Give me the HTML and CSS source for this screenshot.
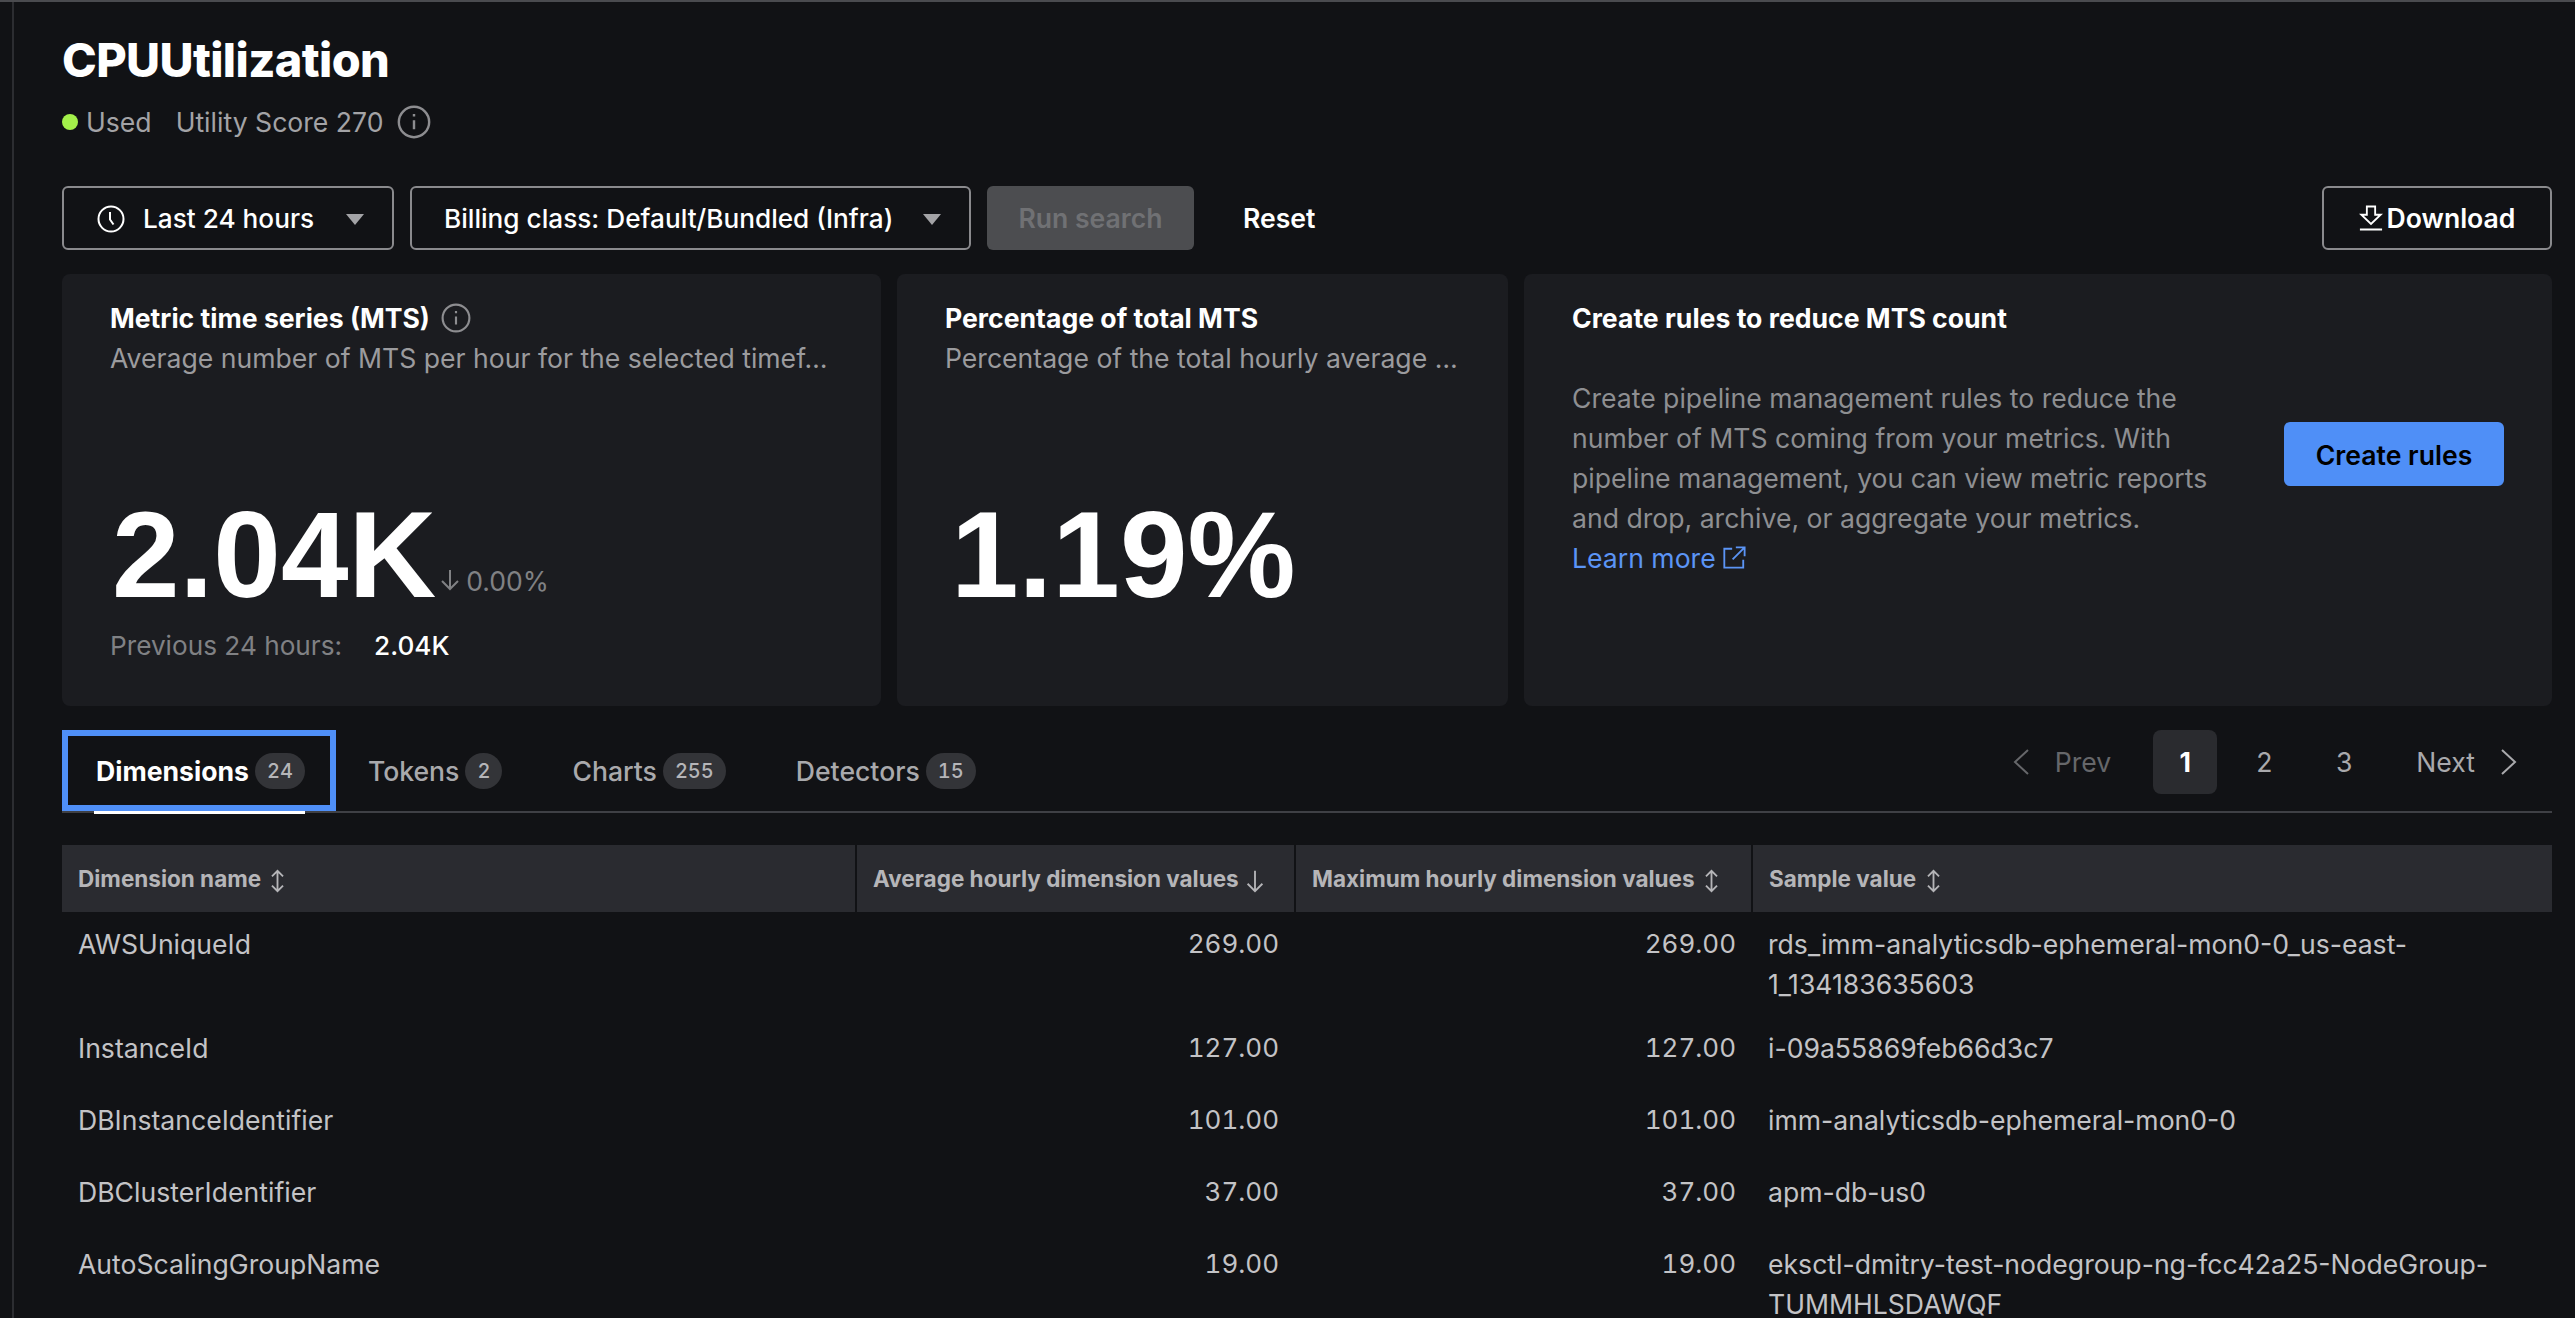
FILE: index.html
```html
<!DOCTYPE html>
<html lang="en">
<head>
    <meta charset="UTF-8">
    <title>CPUUtilization</title>
    <link rel="stylesheet" href="styles.css">
</head>
<body>
    <div class="side-strip"></div>
    <main class="page">
        <h1 class="title">CPUUtilization</h1>
        <div class="meta">
            <span class="dot"></span>
            <span class="used">Used</span>
            <span class="score">Utility Score 270</span>
            <svg class="icon-info" viewBox="0 0 28 28"><circle cx="14" cy="14" r="12.5"/><path d="M14 12.5v7.5M14 7.5v2"/></svg>
        </div>

        <div class="toolbar">
            <button class="select select-time">
                <svg class="icon-clock" viewBox="0 0 28 28"><circle cx="14" cy="14" r="12.5"/><path d="M13 7v7.5l3.5 5"/></svg>
                <span>Last 24 hours</span>
                <span class="caret"></span>
            </button>
            <button class="select select-billing">
                <span>Billing class: Default/Bundled (Infra)</span>
                <span class="caret"></span>
            </button>
            <button class="run-search">Run search</button>
            <button class="reset">Reset</button>
            <button class="download">
                <svg class="icon-download" viewBox="0 0 26 28"><path d="M8.5 1.5h9v9h6L13 20.5 2.500 10.500h6zM1 26.500h24"/></svg>
                <span>Download</span>
            </button>
        </div>

        <section class="cards">
            <div class="card card-mts">
                <div class="card-title">Metric time series (MTS)
                    <svg class="icon-info icon-info-sm" viewBox="0 0 28 28"><circle cx="14" cy="14" r="12.5"/><path d="M14 12.5v7.500M14 7.500v2"/></svg>
                </div>
                <div class="card-sub">Average number of MTS per hour for the selected timef…</div>
                <div class="big-row">
                    <span class="big-number">2.04K</span>
                    <svg class="icon-down" viewBox="0 0 20 22"><path d="M10 1v19M2 12l8 8 8-8"/></svg>
                    <span class="delta">0.00%</span>
                </div>
                <div class="previous"><span>Previous 24 hours:</span><strong>2.04K</strong></div>
            </div>
            <div class="card card-pct">
                <div class="card-title">Percentage of total MTS</div>
                <div class="card-sub">Percentage of the total hourly average …</div>
                <div class="big-row"><span class="big-number">1.19%</span></div>
            </div>
            <div class="card card-rules">
                <div class="rules-text">
                    <div class="card-title">Create rules to reduce MTS count</div>
                    <p class="rules-body">Create pipeline management rules to reduce the number of MTS coming from your metrics. With pipeline management, you can view metric reports and drop, archive, or aggregate your metrics.<br>
                        <a class="learn-more">Learn more
                            <svg class="icon-external" viewBox="0 0 26 26"><path d="M11 3H2.500v20.500H23V15M15 1.500h9.500V11M24 2 11.500 14.500"/></svg>
                        </a>
                    </p>
                </div>
                <button class="create-rules">Create rules</button>
            </div>
        </section>

        <nav class="tabs">
            <a class="tab tab-active">Dimensions <span class="badge">24</span></a>
            <a class="tab">Tokens <span class="badge">2</span></a>
            <a class="tab">Charts <span class="badge">255</span></a>
            <a class="tab">Detectors <span class="badge">15</span></a>
            <div class="pager">
                <span class="pager-link pager-prev">
                    <svg class="icon-chevron" viewBox="0 0 16 26"><path d="M15 1 2 13l13 12"/></svg>
                    Prev
                </span>
                <span class="page-num page-current">1</span>
                <span class="page-num">2</span>
                <span class="page-num">3</span>
                <span class="pager-link pager-next">
                    Next
                    <svg class="icon-chevron" viewBox="0 0 16 26"><path d="m1 1 13 12L1 25"/></svg>
                </span>
            </div>
        </nav>

        <table class="dims">
            <thead>
                <tr>
                    <th class="col-name">Dimension name <svg class="icon-sort" viewBox="0 0 16 26"><path d="M8 2v22M2 8l6-6 6 6M2 18l6 6 6-6"/></svg></th>
                    <th class="col-avg">Average hourly dimension values <svg class="icon-sort icon-sorted" viewBox="0 0 20 26"><path d="M10 2v22M2 16l8 8 8-8"/></svg></th>
                    <th class="col-max">Maximum hourly dimension values <svg class="icon-sort" viewBox="0 0 16 26"><path d="M8 2v22M2 8l6-6 6 6M2 18l6 6 6-6"/></svg></th>
                    <th class="col-sample">Sample value <svg class="icon-sort" viewBox="0 0 16 26"><path d="M8 2v22M2 8l6-6 6 6M2 18l6 6 6-6"/></svg></th>
                </tr>
            </thead>
            <tbody>
                <tr>
                    <td>AWSUniqueId</td>
                    <td class="num">269.00</td>
                    <td class="num">269.00</td>
                    <td>rds_imm-analyticsdb-ephemeral-mon0-0_us-east-<br>1_134183635603</td>
                </tr>
                <tr>
                    <td>InstanceId</td>
                    <td class="num">127.00</td>
                    <td class="num">127.00</td>
                    <td>i-09a55869feb66d3c7</td>
                </tr>
                <tr>
                    <td>DBInstanceIdentifier</td>
                    <td class="num">101.00</td>
                    <td class="num">101.00</td>
                    <td>imm-analyticsdb-ephemeral-mon0-0</td>
                </tr>
                <tr>
                    <td>DBClusterIdentifier</td>
                    <td class="num">37.00</td>
                    <td class="num">37.00</td>
                    <td>apm-db-us0</td>
                </tr>
                <tr>
                    <td>AutoScalingGroupName</td>
                    <td class="num">19.00</td>
                    <td class="num">19.00</td>
                    <td>eksctl-dmitry-test-nodegroup-ng-fcc42a25-NodeGroup-<br>TUMMHLSDAWQF</td>
                </tr>
            </tbody>
        </table>
    </main>
</body>
</html>
```

FILE: styles.css
```css
* {
    box-sizing: border-box;
}
html, body {
    height: 100%;
}
body {
    margin: 0;
    display: flex;
    height: 100vh;
    overflow: hidden;
    background-color: #111215;
    border-top: 2px solid #4a4b4f;
    color: #fff;
    font-family: Inter, "Liberation Sans", sans-serif;
    font-size: 26.6px;
    line-height: 40px;
}
button {
    font-family: inherit;
    font-size: 26.6px;
    line-height: 40px;
    color: inherit;
    background: none;
    border: none;
    padding: 0;
}
svg {
    fill: none;
    stroke: currentColor;
    stroke-width: 2;
    flex: none;
}
.side-strip {
    width: 14px;
    flex: none;
    border-right: 2px solid #2c2d31;
}
.page {
    flex: 1;
    min-width: 0;
    padding: 28px 23px 0 48px;
}
.title {
    margin: 0;
    font-size: 46.8px;
    line-height: 60px;
    font-weight: 800;
    letter-spacing: -0.6px;
}
.meta {
    display: flex;
    align-items: center;
    height: 40px;
    margin-top: 12px;
    color: #a3a3a6;
}
.dot {
    width: 16px;
    height: 16px;
    border-radius: 50%;
    background-color: #a3f04a;
    margin-right: 8px;
}
.used {
    margin-right: 24px;
}
.icon-info {
    width: 34px;
    height: 34px;
    margin-left: 14px;
    color: #8d8d90;
}
.icon-info-sm {
    width: 30px;
    height: 30px;
    margin-left: 11px;
}
.toolbar {
    display: flex;
    align-items: stretch;
    height: 64px;
    margin-top: 44px;
}
.select {
    display: flex;
    align-items: center;
    border: 2px solid #8a8a8d;
    border-radius: 6px;
    padding: 2px 28px 0 32px;
    margin-right: 16px;
    font-size: 26.2px;
    font-weight: 500;
}
.select-time {
    width: 332px;
}
.select-billing {
    width: 561px;
}
.icon-clock {
    width: 28px;
    height: 28px;
    margin: 0 18px 0 1px;
}
.caret {
    width: 0;
    height: 0;
    margin-left: auto;
    border-left: 9px solid transparent;
    border-right: 9px solid transparent;
    border-top: 11px solid #a3a3a6;
}
.run-search {
    width: 207px;
    background-color: #4c4d50;
    color: #707174;
    border-radius: 6px;
    font-weight: 600;
}
.reset {
    margin-left: 49px;
    font-weight: 600;
}
.download {
    display: flex;
    align-items: center;
    justify-content: center;
    gap: 4px;
    width: 230px;
    margin-left: auto;
    border: 2px solid #8a8a8d;
    border-radius: 6px;
    font-weight: 600;
}
.icon-download {
    width: 24px;
    height: 28px;
}
.cards {
    display: grid;
    grid-template-columns: 819px 611px 1028px;
    gap: 16px;
    height: 432px;
    margin-top: 24px;
}
.card {
    display: flex;
    flex-direction: column;
    min-width: 0;
    background-color: #1b1c20;
    border-radius: 8px;
    padding: 24px 48px 40px;
}
.card-title {
    display: flex;
    align-items: center;
    height: 40px;
    font-weight: 700;
    white-space: nowrap;
}
.card-sub {
    color: #9b9b9e;
    white-space: nowrap;
}
.big-row {
    display: flex;
    align-items: flex-end;
    margin-top: 117px;
}
.big-number {
    font-family: "Liberation Sans", Arial, sans-serif;
    font-size: 121.5px;
    line-height: 120px;
    font-weight: 700;
    margin-left: 2px;
}
.card-pct .big-number {
    margin-left: 6px;
}
.icon-down {
    width: 20px;
    height: 22px;
    margin: 0 0 24px 4px;
    color: #808184;
}
.delta {
    margin: 0 0 14px 6px;
    color: #808184;
}
.previous {
    display: flex;
    gap: 32px;
    margin-top: 11px;
    font-size: 26.2px;
    color: #808184;
}
.previous strong {
    color: #fff;
    font-weight: 500;
}
.card-rules {
    flex-direction: row;
    align-items: flex-start;
}
.rules-text {
    flex: 1;
    min-width: 0;
}
.rules-body {
    margin: 40px 0 0;
    width: 670px;
    color: #8e8f92;
}
.learn-more {
    display: inline-flex;
    align-items: center;
    gap: 6px;
    color: #5b94f5;
}
.icon-external {
    width: 24px;
    height: 24px;
}
.create-rules {
    width: 220px;
    height: 64px;
    padding-top: 2px;
    margin-top: 124px;
    background-color: #4f8ff7;
    color: #000;
    border-radius: 6px;
    font-weight: 600;
}
.tabs {
    position: relative;
    display: flex;
    align-items: flex-start;
    height: 83px;
    margin-top: 24px;
    border-bottom: 2px solid #3f4045;
}
.tab {
    display: flex;
    align-items: center;
    gap: 6px;
    height: 81px;
    padding: 0 35px;
    color: #a9a9ac;
    font-weight: 500;
}
.tab-active {
    position: relative;
    padding: 0 25px 0 28px;
    margin-right: -3px;
    border: 6px solid #4f8ff7;
    color: #fff;
    font-weight: 700;
}
.tab-active::after {
    content: "";
    position: absolute;
    left: 26px;
    right: 25px;
    bottom: -9px;
    height: 3px;
    background-color: #fff;
}
.badge {
    min-width: 36px;
    height: 36px;
    padding: 0 12px;
    border-radius: 18px;
    background-color: #333438;
    color: #b5b5b8;
    font-size: 20px;
    font-weight: 500;
    font-feature-settings: "tnum";
    line-height: 36px;
    text-align: center;
}
.pager {
    display: flex;
    align-items: center;
    height: 64px;
    margin-left: auto;
    margin-right: 35px;
    color: #a9a9ac;
}
.pager-link {
    display: flex;
    align-items: center;
}
.pager-prev {
    color: #66676a;
    gap: 26px;
    margin-right: 42px;
}
.pager-next {
    gap: 26px;
    margin-left: 24px;
}
.icon-chevron {
    width: 16px;
    height: 26px;
}
.page-num {
    width: 64px;
    height: 64px;
    margin-right: 16px;
    border-radius: 8px;
    line-height: 64px;
    text-align: center;
}
.page-current {
    margin-right: 15px;
    background-color: #2a2b2f;
    color: #fff;
    font-weight: 700;
}
.dims {
    width: 100%;
    margin-top: 32px;
    border-collapse: collapse;
    table-layout: fixed;
}
.dims th {
    height: 67px;
    padding: 0 16px;
    background-color: #2a2b30;
    border-left: 2px solid #111215;
    color: #b5b5b8;
    font-size: 22.5px;
    font-weight: 700;
    text-align: left;
    white-space: nowrap;
}
.dims th:first-child {
    border-left: none;
}
.col-name {
    width: 794px;
}
.col-avg {
    width: 439px;
}
.col-max {
    width: 457px;
}
.icon-sort {
    height: 24px;
    width: 15px;
    vertical-align: -6px;
    margin-left: 4px;
}
.icon-sorted {
    width: 20px;
    margin-left: 1px;
}
.dims td {
    height: 72px;
    padding: 12px 16px;
    vertical-align: top;
    color: #c3c3c6;
}
.dims .num {
    font-size: 26px;
    font-feature-settings: "tnum";
    text-align: right;
}
```
